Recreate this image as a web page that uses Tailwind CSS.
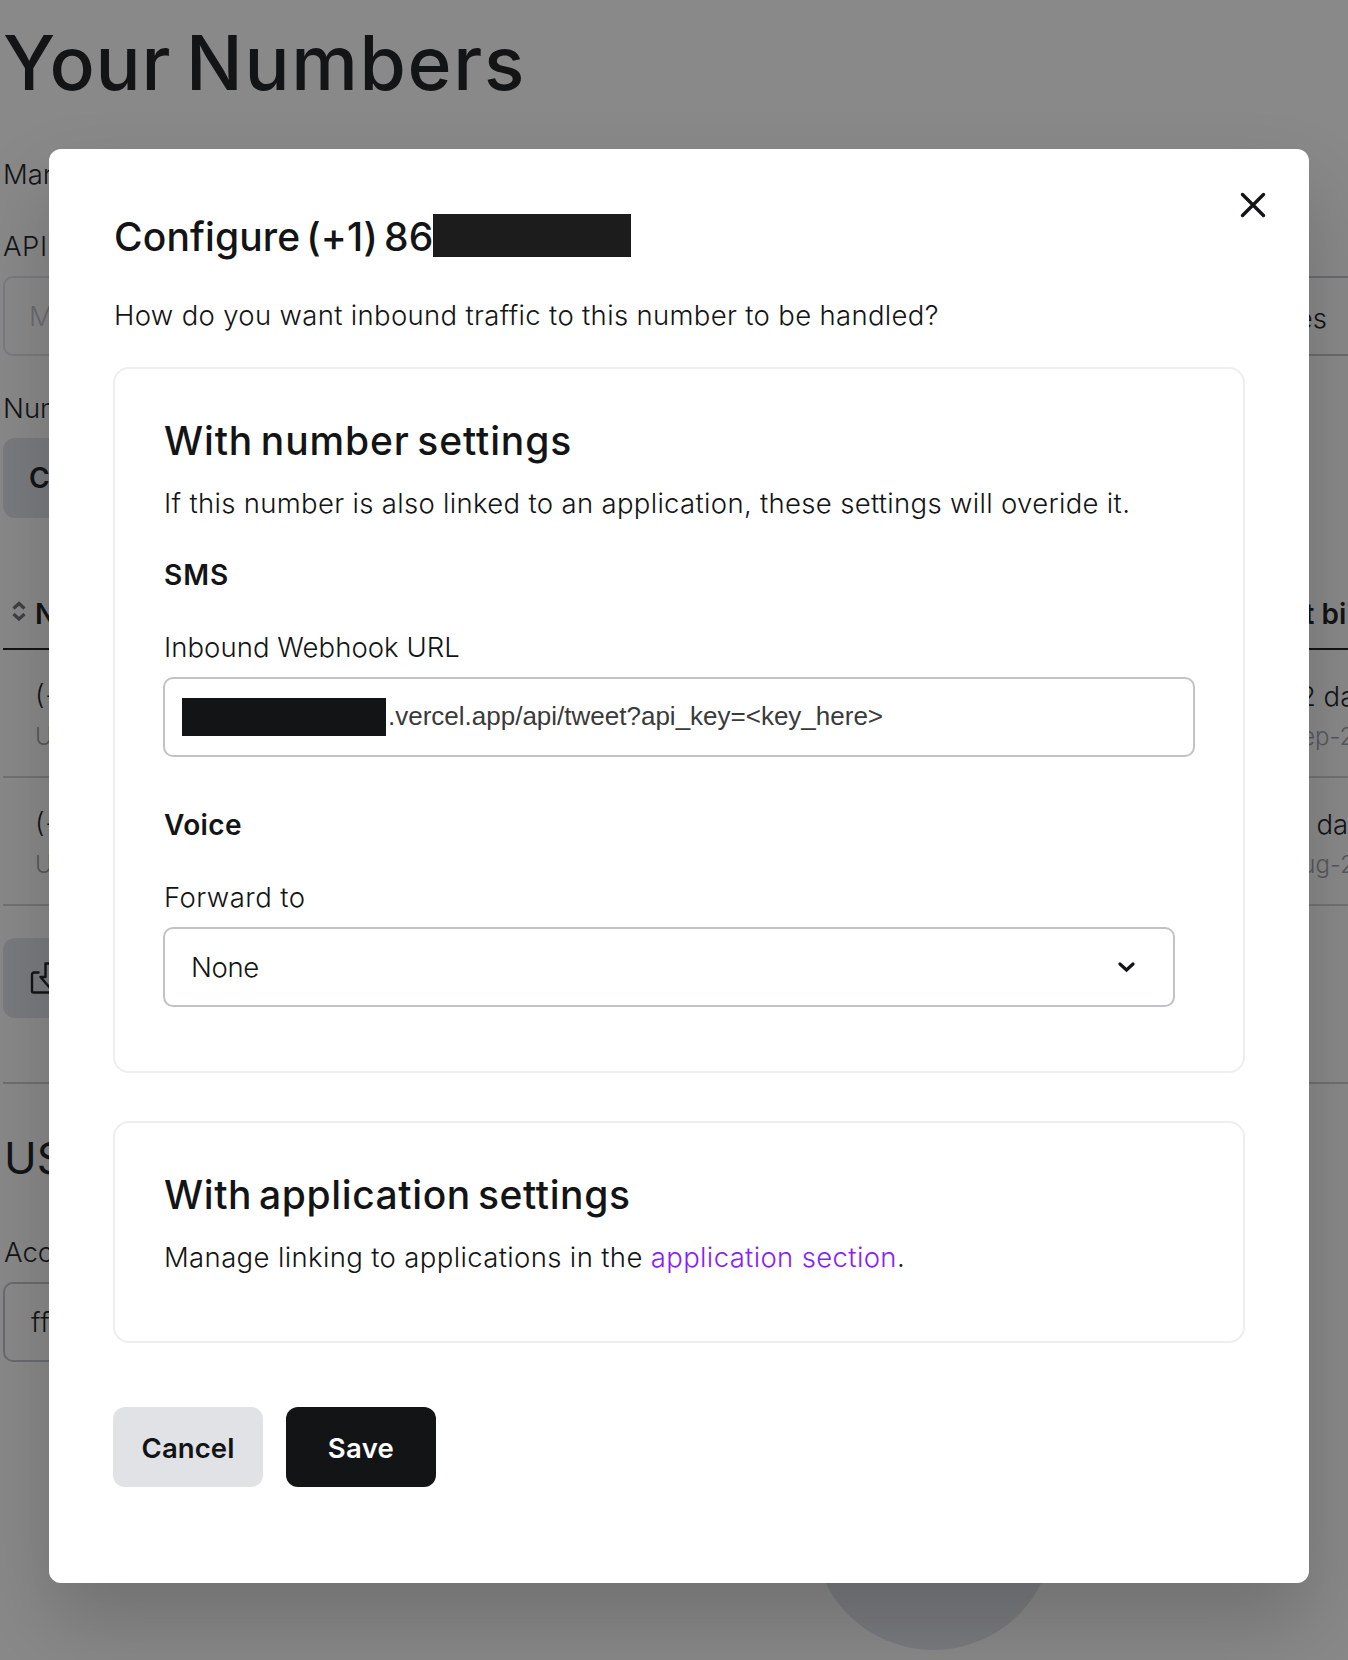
<!DOCTYPE html>
<html lang="en">
<head>
<meta charset="utf-8">
<title>Your Numbers</title>
<script src="https://cdn.jsdelivr.net/npm/@tailwindcss/browser@4"></script>
</head>
<body class="relative h-[1660px] w-[1348px] overflow-hidden bg-white font-['Inter',sans-serif] text-[27.5px] leading-10 font-light text-[#131415]">

<!-- Numbers page -->
<main class="flex h-[1660px] w-[1348px] flex-col overflow-hidden whitespace-nowrap">
  <h1 class="mt-[15px] ml-[3px] text-[75px] leading-[96px] font-medium tracking-[1.7px] [word-spacing:-7px]"><span class="tracking-[0.8px]">Your</span> Numbers</h1>
  <p class="mt-[43px] ml-[3px]">Manage your numbers</p>
  <p class="mt-8 ml-[3px] tracking-[0.6px]">API key</p>
  <div class="mt-[10px] flex h-20 shrink-0">
    <div class="ml-[3px] flex w-[600px] shrink-0 items-center rounded-[10px] border-2 border-[#e1e2e6] pl-[24px] text-[#c1c2c8]">Master</div>
    <div class="ml-[397px] flex w-[500px] shrink-0 items-center rounded-[10px] border-2 border-[#c1c2c8]"><span class="w-[325px] pt-1 text-right">Services</span></div>
  </div>
  <p class="mt-8 ml-[3px]">Number</p>
  <div class="mt-[10px] ml-[3px] flex h-20 w-60 shrink-0 items-center rounded-xl bg-[#e1e2e6] pl-[26px] text-[28px] font-semibold">Country</div>

  <div class="mt-[76px] ml-[3px] flex h-14 shrink-0 items-start border-b-2 border-[#131415] text-[28px] font-semibold">
    <svg class="mt-[7px] ml-[9px] h-5 w-[14px] shrink-0" viewBox="0 0 14 20" fill="none" stroke="#6b6c70" stroke-width="3.200"><path d="M1.500 7.500L7 2.500l5.500 5M1.500 13L7 18l5.500-5"/></svg>
    <span class="ml-[9px] w-[1216px] shrink-0">Number</span><span>Next bill</span>
  </div>
  <div class="ml-[3px] flex h-32 shrink-0 border-b-2 border-[#d0d1d5] pt-[26px] pl-8">
    <div class="w-[1216px] shrink-0"><p>(+1) 86</p><p class="mt-[5px] text-2xl leading-8 text-[#9c9da2]">US</p></div>
    <div><p>In 22 days</p><p class="mt-[5px] text-2xl leading-8 text-[#9c9da2]">12-Sep-2023</p></div>
  </div>
  <div class="ml-[3px] flex h-32 shrink-0 border-b-2 border-[#d0d1d5] pt-[26px] pl-8">
    <div class="w-[1216px] shrink-0"><p>(+1) 86</p><p class="mt-[5px] text-2xl leading-8 text-[#9c9da2]">US</p></div>
    <div><p class="[word-spacing:2.500px]">In 11 days</p><p class="mt-[5px] text-2xl leading-8 text-[#9c9da2]">18-Aug-2023</p></div>
  </div>

  <div class="mt-8 ml-[3px] flex h-20 w-60 shrink-0 rounded-xl bg-[#e1e2e6] pt-[23px] pl-[27px]">
    <svg class="h-[34px] w-10" viewBox="0 0 40 34" fill="none" stroke="#131415" stroke-width="2.400" stroke-linecap="round" stroke-linejoin="round"><path d="M8.500 11.500H4a2 2 0 0 0-2 2V30a1.500 1.500 0 0 0 1.500 1.500h33A1.500 1.500 0 0 0 38 30V13.500a2 2 0 0 0-2-2h-4.500M15.500 16H10.500L20 27l9.500-11H24.500V2.500h-9z"/></svg>
  </div>
  <div class="mt-16 ml-[3px] shrink-0 border-t-2 border-[#c9cacf]"></div>
  <h2 class="mt-[46px] ml-[4px] text-[44px] leading-[56px] font-normal">USA</h2>
  <p class="mt-[46px] ml-[4px]">Account</p>
  <div class="mt-[10px] ml-[3px] flex h-20 w-[600px] shrink-0 items-center rounded-[10px] border-2 border-[#c1c2c8] pl-[26px] tracking-[0.5px]">ff</div>
</main>
<div class="absolute top-[1409px] left-[813px] size-[241px] rounded-full bg-[#e1e2e6]"></div>

<!-- Backdrop -->
<div class="absolute inset-0 bg-[#131415]/50"></div>

<!-- Configure dialog -->
<section class="absolute top-[149px] left-[49px] h-[1434px] w-[1260px] rounded-xl bg-white px-16 pt-16 whitespace-nowrap shadow-[0_40px_80px_rgb(0_0_0/0.18)]">
  <svg class="absolute top-[42px] right-[42px] size-7" viewBox="0 0 28 28" fill="none" stroke="#131415" stroke-width="3.400" stroke-linecap="round"><path d="M3.500 3.500l21 21M24.500 3.500l-21 21"/></svg>

  <h2 class="flex h-12 items-start text-[39px] leading-[48px] font-medium"><span class="w-[320px] pl-px tracking-[0.12px] [word-spacing:-4.500px]">Configure (+1) 86</span><span class="mt-px h-[43px] w-[198px] bg-[#1c1c1c]"></span></h2>
  <p class="mt-[34px] pl-px tracking-[0.33px]">How do you want inbound traffic to this number to be handled?</p>

  <div class="mt-8 rounded-2xl border-2 border-[#eee] px-12 pt-12 pb-16">
    <h3 class="ml-px text-[39px] leading-[48px] font-medium tracking-[0.85px] [word-spacing:-3.500px]">With number settings</h3>
    <p class="mt-[18px] pl-px tracking-[0.32px]">If this number is also linked to an application, these settings will overide it.</p>
    <h4 class="mt-8 pl-px text-[28px] font-semibold tracking-[1px]">SMS</h4>
    <p class="mt-8 pl-px tracking-[0.05px]">Inbound Webhook URL</p>
    <div class="mt-[10px] flex h-20 items-center rounded-[10px] border-2 border-[#c1c2c8] pl-[17px]">
      <span class="h-[38px] w-[204px] bg-[#131415]"></span>
      <span class="pb-0.5 pl-0.5 font-['Liberation_Sans',sans-serif] text-[26px] font-normal text-[#3a3a3a]">.vercel.app/api/tweet?api_key=&lt;key_here&gt;</span>
    </div>
    <h4 class="mt-12 pl-px text-[28px] font-semibold tracking-[0.4px]">Voice</h4>
    <p class="mt-8 pl-px tracking-[0.45px]">Forward to</p>
    <div class="mt-[10px] mr-5 flex h-20 items-center justify-between rounded-[10px] border-2 border-[#c1c2c8] pr-[37px] pl-[26px]">
      <span class="tracking-[-0.4px]">None</span>
      <svg class="h-3 w-[18px]" viewBox="0 0 18 12" fill="none" stroke="#131415" stroke-width="3.200" stroke-linecap="round"><path d="M2 3l6.500 6L15 3"/></svg>
    </div>
  </div>

  <div class="mt-12 rounded-2xl border-2 border-[#eee] px-12 pt-12 pb-16">
    <h3 class="ml-px text-[39px] leading-[48px] font-medium tracking-[0.6px] [word-spacing:-4px]">With application settings</h3>
    <p class="mt-[18px] pl-px tracking-[0.36px]">Manage linking to applications in the <a class="text-[#871eff]">application section</a>.</p>
  </div>

  <div class="mt-16 flex gap-[23px] text-[27.5px] font-semibold">
    <button class="h-20 w-[150px] rounded-xl bg-[#e1e2e6] pt-0.5 tracking-[0.1px]">Cancel</button>
    <button class="h-20 w-[150px] rounded-xl bg-[#131415] pt-0.5 tracking-[0.3px] text-white">Save</button>
  </div>
</section>
</body>
</html>
